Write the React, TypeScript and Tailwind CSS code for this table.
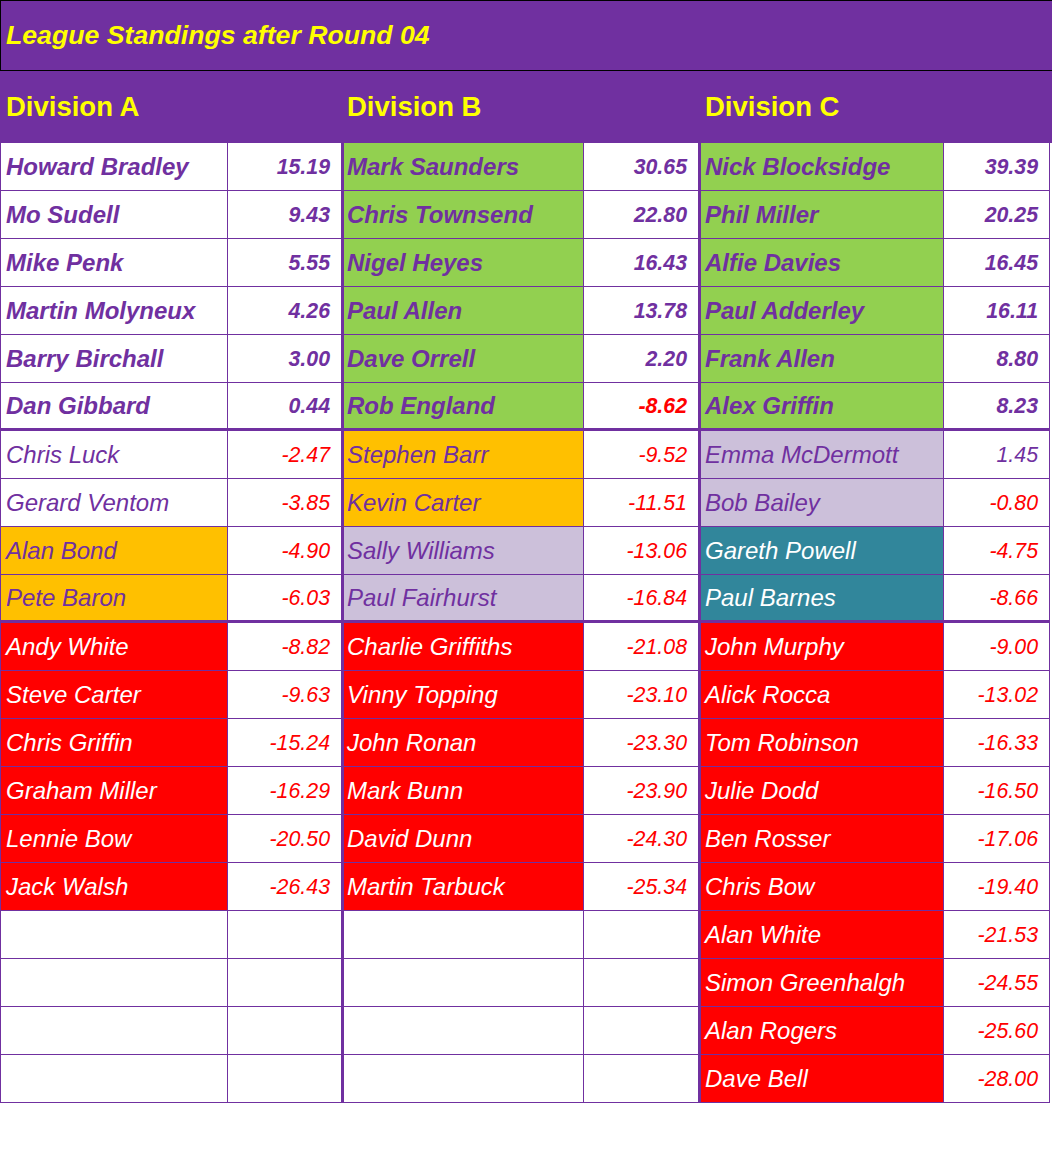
import React from 'react';

type Row = { name: string; score: string; bg: 'white' | 'green' | 'orange' | 'lilac' | 'teal' | 'red' } | null;

const divA: Row[] = [
  { name: 'Howard Bradley', score: '15.19', bg: 'white' },
  { name: 'Mo Sudell', score: '9.43', bg: 'white' },
  { name: 'Mike Penk', score: '5.55', bg: 'white' },
  { name: 'Martin Molyneux', score: '4.26', bg: 'white' },
  { name: 'Barry Birchall', score: '3.00', bg: 'white' },
  { name: 'Dan Gibbard', score: '0.44', bg: 'white' },
  { name: 'Chris Luck', score: '-2.47', bg: 'white' },
  { name: 'Gerard Ventom', score: '-3.85', bg: 'white' },
  { name: 'Alan Bond', score: '-4.90', bg: 'orange' },
  { name: 'Pete Baron', score: '-6.03', bg: 'orange' },
  { name: 'Andy White', score: '-8.82', bg: 'red' },
  { name: 'Steve Carter', score: '-9.63', bg: 'red' },
  { name: 'Chris Griffin', score: '-15.24', bg: 'red' },
  { name: 'Graham Miller', score: '-16.29', bg: 'red' },
  { name: 'Lennie Bow', score: '-20.50', bg: 'red' },
  { name: 'Jack Walsh', score: '-26.43', bg: 'red' },
  null,
  null,
  null,
  null,
];

const divB: Row[] = [
  { name: 'Mark Saunders', score: '30.65', bg: 'green' },
  { name: 'Chris Townsend', score: '22.80', bg: 'green' },
  { name: 'Nigel Heyes', score: '16.43', bg: 'green' },
  { name: 'Paul Allen', score: '13.78', bg: 'green' },
  { name: 'Dave Orrell', score: '2.20', bg: 'green' },
  { name: 'Rob England', score: '-8.62', bg: 'green' },
  { name: 'Stephen Barr', score: '-9.52', bg: 'orange' },
  { name: 'Kevin Carter', score: '-11.51', bg: 'orange' },
  { name: 'Sally Williams', score: '-13.06', bg: 'lilac' },
  { name: 'Paul Fairhurst', score: '-16.84', bg: 'lilac' },
  { name: 'Charlie Griffiths', score: '-21.08', bg: 'red' },
  { name: 'Vinny Topping', score: '-23.10', bg: 'red' },
  { name: 'John Ronan', score: '-23.30', bg: 'red' },
  { name: 'Mark Bunn', score: '-23.90', bg: 'red' },
  { name: 'David Dunn', score: '-24.30', bg: 'red' },
  { name: 'Martin Tarbuck', score: '-25.34', bg: 'red' },
  null,
  null,
  null,
  null,
];

const divC: Row[] = [
  { name: 'Nick Blocksidge', score: '39.39', bg: 'green' },
  { name: 'Phil Miller', score: '20.25', bg: 'green' },
  { name: 'Alfie Davies', score: '16.45', bg: 'green' },
  { name: 'Paul Adderley', score: '16.11', bg: 'green' },
  { name: 'Frank Allen', score: '8.80', bg: 'green' },
  { name: 'Alex Griffin', score: '8.23', bg: 'green' },
  { name: 'Emma McDermott', score: '1.45', bg: 'lilac' },
  { name: 'Bob Bailey', score: '-0.80', bg: 'lilac' },
  { name: 'Gareth Powell', score: '-4.75', bg: 'teal' },
  { name: 'Paul Barnes', score: '-8.66', bg: 'teal' },
  { name: 'John Murphy', score: '-9.00', bg: 'red' },
  { name: 'Alick Rocca', score: '-13.02', bg: 'red' },
  { name: 'Tom Robinson', score: '-16.33', bg: 'red' },
  { name: 'Julie Dodd', score: '-16.50', bg: 'red' },
  { name: 'Ben Rosser', score: '-17.06', bg: 'red' },
  { name: 'Chris Bow', score: '-19.40', bg: 'red' },
  { name: 'Alan White', score: '-21.53', bg: 'red' },
  { name: 'Simon Greenhalgh', score: '-24.55', bg: 'red' },
  { name: 'Alan Rogers', score: '-25.60', bg: 'red' },
  { name: 'Dave Bell', score: '-28.00', bg: 'red' },
];

const bgClass = {
  white: 'bg-white text-[#7030a0]',
  green: 'bg-[#92d050] text-[#7030a0]',
  orange: 'bg-[#ffc000] text-[#7030a0]',
  lilac: 'bg-[#ccc0da] text-[#7030a0]',
  teal: 'bg-[#31869b] text-white',
  red: 'bg-[#ff0000] text-white',
};

function Cells({ row, idx, div }: { row: Row; idx: number; div: number }) {
  const top = idx < 6;
  const rowBorder = idx === 5 || idx === 9 ? 'border-b-[3px]' : 'border-b';
  const namePad = div === 0 ? 'pl-[5px] border-l' : div === 1 ? 'pl-[3px]' : 'pl-[4px]';
  const scoreRight = div === 2 ? 'border-r' : 'border-r-[3px]';
  const weight = top ? 'font-bold' : 'font-normal';
  const negative = row ? row.score.startsWith('-') : false;

  return (
    <>
      <div
        className={`h-12 flex items-center border-r border-[#7030a0] ${rowBorder} ${namePad} ${row ? bgClass[row.bg] : 'bg-white'} ${weight} text-[24px] italic whitespace-nowrap overflow-hidden`}
      >
        {row?.name}
      </div>
      <div
        className={`h-12 flex items-center justify-end pr-[11px] pt-[2px] bg-white border-[#7030a0] ${rowBorder} ${scoreRight} ${weight} text-[21.33px] italic ${negative ? 'text-[#ff0000]' : 'text-[#7030a0]'}`}
      >
        {row?.score}
      </div>
    </>
  );
}

export default function App() {
  const divisions = ['Division A', 'Division B', 'Division C'];
  const data = [divA, divB, divC];

  return (
    <div className="w-[1052px] bg-white pb-[50px] font-['Liberation_Sans',Arial,sans-serif]">
      <div className="h-[71px] bg-[#7030a0] border-t border-b border-l border-black flex items-center pl-[5px]">
        <h1 className="text-[26.67px] font-bold italic text-[#ffff00] leading-none">League Standings after Round 04</h1>
      </div>

      <div className="h-[72px] bg-[#7030a0] grid grid-cols-[228px_116px_240px_117px_243px_106px] items-center">
        {divisions.map((d, i) => (
          <div
            key={d}
            className={`col-span-2 text-[27.5px] font-bold text-[#ffff00] leading-none ${i === 0 ? 'pl-[6px]' : i === 1 ? 'pl-[3px]' : 'pl-[4px]'}`}
          >
            {d}
          </div>
        ))}
      </div>

      <div className="w-[1050px] grid grid-cols-[228px_116px_240px_117px_243px_106px] leading-none">
        {Array.from({ length: 20 }).map((_, idx) => (
          <React.Fragment key={idx}>
            {data.map((rows, div) => (
              <Cells key={div} row={rows[idx]} idx={idx} div={div} />
            ))}
          </React.Fragment>
        ))}
      </div>
    </div>
  );
}
